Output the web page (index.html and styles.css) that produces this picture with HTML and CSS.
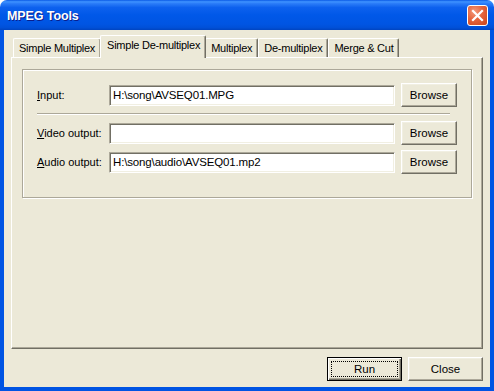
FILE: index.html
```html
<!DOCTYPE html>
<html>
<head>
<meta charset="utf-8">
<link rel="stylesheet" href="styles.css">
</head>
<body>
<div class="window">
  <div class="titlebar">
    <span class="title">MPEG Tools</span>
    <span class="close-btn"><svg width="13" height="13" viewBox="0 0 13 13"><path d="M2 2 L11 11 M11 2 L2 11" stroke="#fff" stroke-width="2.2" stroke-linecap="square"/></svg></span>
  </div>
  <div class="frame">
    <div class="tabstrip">
      <div class="tab">Simple Multiplex</div>
      <div class="tab selected">Simple De-multiplex</div>
      <div class="tab">Multiplex</div>
      <div class="tab">De-multiplex</div>
      <div class="tab">Merge &amp; Cut</div>
    </div>
    <div class="panel">
      <div class="group">
        <div class="row">
          <span class="label"><u>I</u>nput:</span>
          <span class="edit">H:\song\AVSEQ01.MPG</span>
          <span class="btn browse">Browse</span>
        </div>
        <div class="sep"></div>
        <div class="row">
          <span class="label"><u>V</u>ideo output:</span>
          <span class="edit"></span>
          <span class="btn browse">Browse</span>
        </div>
        <div class="row row3">
          <span class="label"><u>A</u>udio output:</span>
          <span class="edit">H:\song\audio\AVSEQ01.mp2</span>
          <span class="btn browse">Browse</span>
        </div>
      </div>
    </div>
    <div class="actions">
      <span class="btn default"><span class="focus">Run</span></span>
      <span class="btn action">Close</span>
    </div>
  </div>
</div>
</body>
</html>
```
FILE: styles.css
```css
html, body {
  margin: 0;
  padding: 0;
  background: #ffffff;
}
.window {
  width: 494px;
  height: 391px;
  display: flex;
  flex-direction: column;
  font-family: "Liberation Sans", Arial, sans-serif;
  font-size: 11px;
  color: #000;
}
.titlebar {
  height: 30px;
  flex: none;
  display: flex;
  align-items: center;
  justify-content: space-between;
  padding: 0 6px 0 7px;
  box-sizing: border-box;
  border-radius: 7px 7px 0 0;
  background: linear-gradient(to bottom, #0a5ae6 0%, #3f93ff 6%, #2a7cf8 12%, #0d61ee 25%, #0058e8 50%, #0055e3 80%, #0050d8 92%, #0044c0 100%);
}
.title {
  color: #fff;
  font-weight: bold;
  font-size: 12.5px;
  letter-spacing: -0.1px;
  text-shadow: 1px 1px 0 #0a1e8c;
  margin-top: 1px;
}
.close-btn {
  width: 21px;
  height: 21px;
  box-sizing: border-box;
  border: 1px solid #fff;
  border-radius: 3px;
  background: radial-gradient(circle at 35% 30%, #f39a7c 0%, #e5643d 45%, #cc4418 100%);
  display: flex;
  align-items: center;
  justify-content: center;
  margin-top: 1px;
}
.close-btn svg { display: block; }
.frame {
  flex: 1;
  display: flex;
  flex-direction: column;
  background: #ece9d8;
  border-style: solid;
  border-color: #0054e3;
  border-width: 0 4px 4px 4px;
  padding: 5px 7px 6px 7px;
  box-sizing: border-box;
  min-height: 0;
}
.tabstrip {
  height: 22px;
  display: flex;
  align-items: flex-end;
  padding-left: 2px;
  position: relative;
  z-index: 1;
  flex: none;
}
.tab {
  height: 19px;
  box-sizing: border-box;
  padding: 3px 5px 0 5px;
  border-top: 1px solid #fff;
  border-left: 1px solid #fff;
  border-right: 1px solid #716f64;
  box-shadow: inset -1px 0 #aca899;
  border-radius: 2px 2px 0 0;
  background: #ece9d8;
  white-space: nowrap;
  letter-spacing: -0.25px;
}
.tab.selected {
  height: 23px;
  margin: 0 -1px 0 -1px;
  padding: 3px 5px 0 6px;
  position: relative;
  top: 1px;
  z-index: 2;
}
.panel {
  flex: 1;
  border-top: 1px solid #fff;
  border-left: 1px solid #fff;
  border-right: 1px solid #716f64;
  border-bottom: 1px solid #716f64;
  box-shadow: inset -1px -1px #aca899;
  padding: 11px 10px 0 10px;
  box-sizing: border-box;
}
.group {
  border: 1px solid #aca899;
  box-shadow: inset 1px 1px #fff, 1px 1px #fff;
  padding: 13px 10px 22px 14px;
  height: 129px;
  box-sizing: border-box;
}
.row {
  display: flex;
  align-items: center;
  height: 24px;
}
.row3 { margin-top: 5px; }
.label {
  width: 72px;
  flex: none;
  white-space: nowrap;
}
.edit {
  width: 286px;
  height: 21px;
  box-sizing: border-box;
  background: #fff;
  border-style: solid;
  border-width: 1px;
  border-color: #aca899 #fff #fff #aca899;
  box-shadow: inset 1px 1px #716f64, inset -1px -1px #f1efe2;
  padding: 3px 0 0 3px;
  margin-right: 6px;
  white-space: nowrap;
  overflow: hidden;
  flex: none;
  font-size: 11.5px;
  letter-spacing: -0.15px;
}
.btn {
  box-sizing: border-box;
  height: 24px;
  display: flex;
  align-items: center;
  justify-content: center;
  background: #ece9d8;
  border-style: solid;
  border-width: 1px;
  border-color: #fff #716f64 #716f64 #fff;
  box-shadow: inset -1px -1px #aca899, inset 1px 1px #f1efe2;
  flex: none;
  font-size: 11.5px;
}
.browse { width: 56px; }
.sep {
  margin: 6px 11px 6px 0;
  height: 0;
  border-top: 1px solid #aca899;
  border-bottom: 1px solid #fff;
}
.actions {
  flex: none;
  display: flex;
  justify-content: flex-end;
  gap: 6px;
  margin-top: 8px;
}
.action { width: 75px; }
.default {
  width: 75px;
  border: 1px solid #000;
  box-shadow: inset 1px 1px #fff, inset -1px -1px #716f64, inset -2px -2px #aca899;
  padding: 3px;
}
.focus {
  width: 100%;
  height: 100%;
  box-sizing: border-box;
  border: 1px dotted #000;
  display: flex;
  align-items: center;
  justify-content: center;
}
```
